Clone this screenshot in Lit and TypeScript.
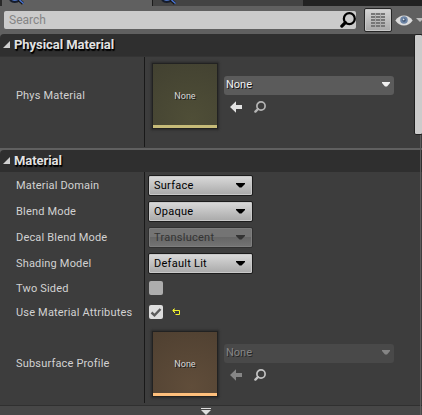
import { LitElement, html, css, svg } from "lit";
import { customElement, property } from "lit/decorators.js";
import { classMap } from "lit/directives/class-map.js";

const lens = svg`<circle cx="7" cy="5" r="4.1" fill="none" stroke="currentColor" stroke-width="1.7"/><path d="M4 8 L1.4 10.6" stroke="currentColor" stroke-width="2.4" stroke-linecap="round"/>`;

@customElement("combo-button")
class ComboButton extends LitElement {
  @property() value = "";
  @property({ type: Boolean }) disabled = false;
  static styles = css`
    :host { display: block; }
    .combo {
      box-sizing: border-box; width: 105px; height: 21px; display: flex; align-items: center;
      justify-content: space-between; padding: 0 7px 0 5px; border: 1px solid #1c1c1c; border-radius: 2px;
      background: linear-gradient(#dadada, #a9a9a9); box-shadow: inset 0 0 0 1px #c9c9c9;
      font: 11px/19px Roboto, sans-serif; letter-spacing: 0.26px; color: #000;
    }
    .off { background: linear-gradient(#747474 45%, #666 50%, #747474); box-shadow: inset 0 0 0 1px #7e7e7e; color: #333; border-color: #303030; }
    svg { display: block; }
  `;
  render() {
    return html`<div class=${classMap({ combo: true, off: this.disabled })}>
      <span>${this.value}</span>
      <svg width="9" height="5" viewBox="0 0 9 5"><path d="M0 0H9V1L5.5 4.5H3.5L0 1Z" fill="currentColor"/></svg>
    </div>`;
  }
}

@customElement("asset-picker")
class AssetPicker extends LitElement {
  @property({ type: Boolean }) disabled = false;
  @property() tone = "olive";
  static styles = css`
    :host { display: flex; font: 11px/18px Roboto, sans-serif; }
    .thumb {
      box-sizing: border-box; width: 64px; height: 64px; margin: 0 7px 0 5px; flex: none; display: flex;
      align-items: center; justify-content: center; padding-top: 3px; font-size: 9px; color: #d8d8d8;
      text-shadow: 1px 1px 0 #1a1a1a; box-shadow: 0 0 0 1px #222, 0 0 2px 2px #2a2a2a;
    }
    .olive { background: radial-gradient(circle at 60% 90%, #4f4e37, #424131); border-bottom: 3px solid #c6bb78; }
    .brown { background: radial-gradient(circle at 60% 90%, #604d3a, #4f4031); border-bottom: 3px solid #ffc07c; }
    .side { padding-top: 12px; }
    .field {
      box-sizing: border-box; width: 170px; height: 19px; padding: 0 4px 2px 2px; display: flex; align-items: center;
      justify-content: space-between; background: #5b5b5b; border-radius: 3px; color: #f0f0f0;
      text-shadow: 1px 1px 0 #111;
    }
    .off .field { background: #494949; color: #858585; text-shadow: 1px 1px 0 #252525; }
    .tools { display: flex; gap: 12px; padding: 6px 0 0 6px; color: #e2e2e2; }
    .off .back { color: #868686; }
    .find { color: #b5b5b5; }
    .off .find { color: #c4c4c4; }
    svg { display: block; }
  `;
  render() {
    return html`<div class="thumb ${this.tone}">None</div>
      <div class=${classMap({ side: true, off: this.disabled })}>
        <div class="field"><span>None</span>
          <svg width="8" height="5" viewBox="0 0 8 5"><path d="M0 0H8V1L5 4.4H3L0 1Z" fill="currentColor"/></svg>
        </div>
        <div class="tools">
          <svg class="back" width="12" height="12" viewBox="0 0 12 12"><path d="M0 6L6 0.3V4H12V8H6V11.7Z" fill="currentColor"/></svg>
          <svg class="find" width="12" height="12" viewBox="0 0 12 12">${lens}</svg>
        </div>
      </div>`;
  }
}

@customElement("app-root")
class AppRoot extends LitElement {
  static styles = css`
    :host {
      display: block; position: relative; width: 422px; height: 415px; overflow: hidden; background: #3d3d3d;
      font: 11px/16px Roboto, sans-serif; color: #d2d2d2;
    }
    svg { display: block; flex: none; }
    .tabs { display: flex; height: 6px; background: #222; }
    .tab { box-sizing: border-box; width: 150px; overflow: hidden; background: #434343; padding-left: 8px; }
    .tab.active { width: 153px; background: #606060; border-right: 1px solid #1b1b1b; border-left: 2px solid #292929; padding-left: 7px; }
    .toolbar { display: flex; height: 28px; background: #606060; align-items: flex-start; box-sizing: border-box; padding: 2px 0 0 4px; }
    .search {
      box-sizing: border-box; width: 352px; height: 18px; margin-top: 3px; flex: none; padding: 0 0 0 5px; display: flex;
      align-items: center; justify-content: space-between; background: #cbcbcb; border-radius: 2px; color: #858585; font-size: 12px;
    }
    .glass { color: #000; }
    .grid {
      box-sizing: border-box; width: 28px; height: 24px; margin-left: 8px; flex: none; display: flex; align-items: center; justify-content: center;
      border: 1px solid #252525; border-radius: 2px; background: linear-gradient(#d5d5d5, #a8a8a8); box-shadow: inset 0 0 0 1px #c8c8c8;
    }
    .eye { margin: 7px 3px 0; }
    .caret { margin-top: 10px; }
    .head {
      box-sizing: border-box; height: 22px; display: flex; align-items: center; gap: 4px; padding: 0 0 0 3px; background: #2f2f2f;
      font-size: 13px; font-weight: 700; color: #e2e2e2; text-shadow: 1px 1px 0 #000, 1px 2px 1px #000; letter-spacing: -0.06px;
    }
    .head svg { margin-top: -2px; }
    .wrap { background: #606060; }
    .wrap .head { border-radius: 4px 0 0 0; }
    .first { box-sizing: border-box; height: 92px; border-top: 1px solid #343434; background: #3d3d3d; }
    .seam { height: 2px; background: #606060; }
    .row { display: flex; align-items: center; height: 26px; }
    .row.check { height: 24px; }
    .row.asset { height: 79px; }
    .label { box-sizing: border-box; width: 145px; height: 100%; flex: none; padding: 2px 0 0 16px; display: flex; align-items: center; border-right: 1px solid #191919; letter-spacing: 0.18px; }
    .value { padding-left: 3px; display: flex; align-items: center; }
    .row.asset .label { padding-top: 0; }
    .row.asset .value { padding-top: 1px; }
    .combo-slot { height: 20px; }
    .box { width: 14px; height: 14px; margin-left: 1px; border-radius: 2px; background: #adadad; }
    .box.on { background: #dedede; }
    .reset { margin-left: 9px; }
    .row.tall { height: 90px; }
    .tall .label { padding: 0 0 13px 16px; }
    .tall .value { margin-bottom: 12px; }
    .more { box-sizing: border-box; height: 10px; margin-top: 2px; border-top: 1px solid #303030; background: #474747; padding: 2px 0 0 201px; }
    .track { position: absolute; left: 420px; top: 134px; width: 1px; height: 281px; background: #5c5c5c; }
    .thumb { position: absolute; box-sizing: border-box; left: 414px; top: 34px; width: 9px; height: 101px; background: #cbcbcb; border: 1px solid #202020; border-radius: 2px; }
  `;

  private tabLens() {
    return html`<svg width="18" height="6" viewBox="0 0 18 6"><path d="M1 0Q5.5 4 11 0" fill="#4b70bd" stroke="#151c2b" stroke-width="2"/><path d="M10 0L14 3.5" stroke="#151515" stroke-width="3"/><path d="M10.5 0L14.5 3.5" stroke="#4975d5" stroke-width="1.5"/></svg>`;
  }

  private heading(title: string) {
    return html`<div class="head"><svg width="7" height="7" viewBox="0 0 7 7"><path d="M7 0V7H0Z" fill="#d0d0d0"/></svg><span>${title}</span></div>`;
  }

  private combo(label: string, value: string, disabled = false) {
    return html`<div class="row"><div class="label">${label}</div><div class="value combo-slot"><combo-button .value=${value} .disabled=${disabled}></combo-button></div></div>`;
  }

  render() {
    return html`
      <div class="tabs"><div class="tab active">${this.tabLens()}</div><div class="tab">${this.tabLens()}</div></div>
      <div class="toolbar">
        <div class="search"><span>Search</span><svg class="glass" width="16" height="16" viewBox="0 0 12 12">${lens}</svg></div>
        <div class="grid"><svg width="14" height="14" viewBox="0 0 14 14"><path d="M0 1H14M0 4H14M0 7H14M0 10H14M0 13H14" stroke="#777" stroke-width="2"/><path d="M4.5 0V14M9.5 0V14" stroke="#a9a9a9"/></svg></div>
        <svg class="eye" width="18" height="11" viewBox="0 0 18 11"><path d="M0.3 5.5Q4 0.5 9 0.5T17.7 5.5Q14 10.5 9 10.5T0.3 5.5Z" fill="#dcdcdc"/><circle cx="9" cy="5" r="3.8" fill="#6c84a5"/><circle cx="9" cy="5" r="1.7" fill="#3c506c"/><circle cx="8.6" cy="4.4" r="0.9" fill="#dbe5ef"/></svg>
        <svg class="caret" width="8" height="4" viewBox="0 0 8 4"><path d="M0 0H8L4 4Z" fill="#bdbdbd"/></svg>
      </div>
      <div class="wrap">${this.heading("Physical Material")}</div>
      <div class="first"><div class="row tall"><div class="label">Phys Material</div><div class="value"><asset-picker></asset-picker></div></div></div>
      <div class="seam"></div>
      <div class="wrap">${this.heading("Material")}</div>
      ${this.combo("Material Domain", "Surface")}
      ${this.combo("Blend Mode", "Opaque")}
      ${this.combo("Decal Blend Mode", "Translucent", true)}
      ${this.combo("Shading Model", "Default Lit")}
      <div class="row check"><div class="label">Two Sided</div><div class="value"><div class="box"></div></div></div>
      <div class="row check"><div class="label">Use Material Attributes</div><div class="value">
        <div class="box on"><svg width="14" height="14" viewBox="0 0 14 14"><path d="M2.5 7.5L5.5 10.3L11.5 4" fill="none" stroke="#5b5b5b" stroke-width="2.4"/></svg></div>
        <svg class="reset" width="8" height="8" viewBox="0 0 8 8"><path d="M0.5 2.5H7.5V6.5H3.5M1.5 1V4M2.5 0.5V1.5M2.5 3.5V5" fill="none" stroke="#f2f22e"/></svg>
      </div></div>
      <div class="row asset"><div class="label">Subsurface Profile</div><div class="value"><asset-picker tone="brown" disabled></asset-picker></div></div>
      <div class="more"><svg width="10" height="7" viewBox="0 0 10 7"><path d="M0 0.5H10" stroke="#ddd"/><path d="M0 2H10L5 7Z" fill="#ddd"/></svg></div>
      <div class="track"></div><div class="thumb"></div>`;
  }
}
